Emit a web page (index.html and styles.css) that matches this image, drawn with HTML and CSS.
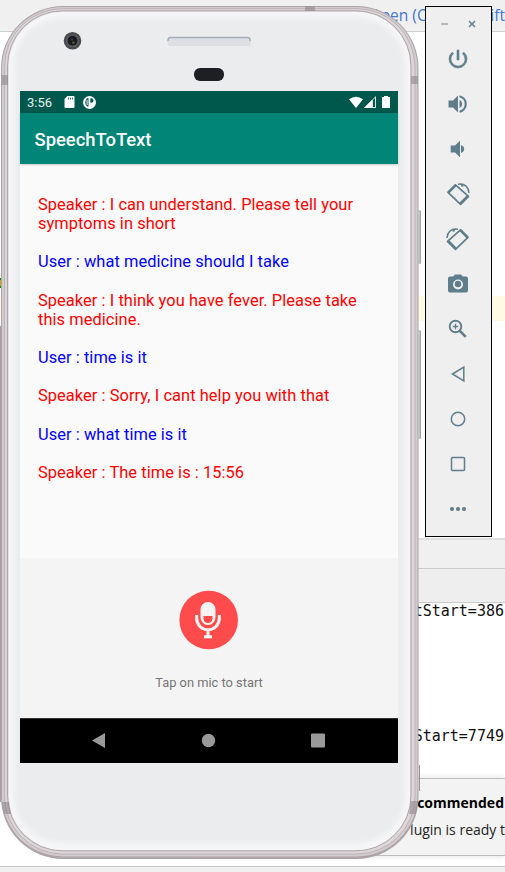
FILE: index.html
```html
<!DOCTYPE html>
<html lang="en">
<head>
<meta charset="utf-8">
<title>SpeechToText</title>
<link rel="stylesheet" href="styles.css">
</head>
<body>
<div class="desktop">
  <div class="ide">
    <div class="ide-top"><span class="hint">Open (C<span class="keys">trl+Sh</span>ift</span></div>
    <div class="editor"><div class="mark"></div><div class="highlight"></div></div>
    <div class="tabs"></div>
    <div class="tool-head"></div>
    <div class="console">
      <div class="log">tStart=386</div>
      <div class="log">Start=7749</div>
    </div>
    <div class="notice">
      <div class="notice-title">commended</div>
      <div class="notice-body">lugin is ready t</div>
    </div>
    <div class="gap"></div>
    <div class="statusline"></div>
  </div>

  <div class="phone">
    <svg class="frame" width="424" height="854" viewBox="0 6 424 854">
      <defs>
        <linearGradient id="key" x1="0" x2="1" y1="0" y2="0">
          <stop offset="0" stop-color="#a8a8a8"/><stop offset=".45" stop-color="#e2e6e3"/><stop offset="1" stop-color="#969896"/>
        </linearGradient>
        <filter id="soft" x="-5%" y="-5%" width="110%" height="110%"><feGaussianBlur stdDeviation="2.500"/></filter>
      </defs>
      <rect x="416" y="210" width="5" height="54" rx="1.500" fill="url(#key)"/>
      <rect x="416" y="330" width="5" height="109" rx="1.500" fill="url(#key)"/>
      <path d="M419.500 765v26" stroke="#989496"/>
      <path d="M.5 326v476" stroke="#a5a1a4"/>
      <rect x="1" y="6" width="417.500" height="853" rx="62" fill="#aca4a6"/>
      <rect x="2" y="7" width="415.500" height="849.500" rx="61" fill="#d3cccf"/>
      <rect x="4.500" y="8.700" width="410.500" height="845.300" rx="58" fill="#ddd6d9" stroke="#b8b0b3" stroke-width=".9"/>
      <rect x="7.500" y="10.800" width="403.500" height="840" rx="55" fill="#e4e1e4" stroke="#a59fa2" stroke-width=".9"/>
      <rect x="9" y="12" width="401" height="838" rx="54" fill="#f6f6f8"/>
      <rect x="14" y="18" width="391" height="825" rx="48" fill="#ebecee" filter="url(#soft)"/>
      <path d="M2 75h6v10H2zM411 76h7v8h-7zM305 6.500h10v4.500h-10zM2 802h7l2 12H4z" fill="#8d8789" opacity=".6"/>
      <path d="M411 801h7l-2 13h-7z" fill="#8d8789" opacity=".6"/>
      <circle cx="72.500" cy="40.800" r="8.800" fill="#494b4f"/>
      <circle cx="72.500" cy="40.800" r="6.300" fill="#5e6064"/>
      <circle cx="72.500" cy="40.800" r="5" fill="#191b20"/>
      <circle cx="73.300" cy="42.800" r="1.300" fill="#595728"/>
      <circle cx="72" cy="39.500" r="1" fill="#33415b"/>
      <rect x="167.500" y="37" width="83.500" height="9" rx="3" fill="#dce0e4"/>
      <path d="M168 41v-1q0-2.500 3-2.500h76q3 0 3 2.500v1" fill="none" stroke="#a6adb7" stroke-width="1.300"/>
      <rect x="194" y="68" width="30" height="13" rx="6" fill="#1d1f23"/>
    </svg>
    <div class="screen">
      <div class="status">
        <span class="time">3:56</span>
        <svg class="sd" width="11" height="12" viewBox="0 0 11 12"><path d="M3.500 0h6q1 0 1 1v10q0 1-1 1h-8q-1 0-1-1V3z" fill="#fff"/><path d="M4.500 1.500v2M6.500 1.500v2M8.500 1.500v2" stroke="#00574b" stroke-width=".8"/></svg>
        <svg class="app" width="13" height="13" viewBox="0 0 13 13"><circle cx="6.500" cy="6.500" r="6.500" fill="#fff"/><path d="M5.500 2.200v8.300H4.200Q2.300 9 2.300 6.500T4 2.200z" fill="#00574b"/><path d="M4.100 4v5" stroke="#fff"/><path d="M7.300 2.300h1.200q2 .3 2 2.200t-2 2.200H7.300z" fill="#00574b"/></svg>
        <svg class="signals" width="42" height="13" viewBox="0 0 42 13"><path d="M0 3.300Q7 -1.700 14 3.300L7 12z" fill="#fff"/><path d="M15 12 27 0v12z" fill="#d5e6e3"/><path d="M15 12l8-8v8z" fill="#fff"/><path d="M24 4v7h2V2z" fill="#00574b"/><path d="M35 0h4v1h2v11h-8V1h2z" fill="#fff"/></svg>
      </div>
      <div class="appbar">SpeechToText</div>
      <div class="chat">
        <p class="speaker">Speaker : I can understand. Please tell your<br>symptoms in short</p>
        <p class="user">User : what medicine should I take</p>
        <p class="speaker">Speaker : I think you have fever. Please take<br>this medicine.</p>
        <p class="user">User : time is it</p>
        <p class="speaker">Speaker : Sorry, I cant help you with that</p>
        <p class="user">User : what time is it</p>
        <p class="speaker">Speaker : The time is : 15:56</p>
      </div>
      <div class="mic">
        <svg width="60" height="60" viewBox="0 0 60 60"><circle cx="29.700" cy="30" r="29.300" fill="#ff4b4b"/><rect x="21.500" y="12" width="15" height="23" rx="7.500" fill="#f8f4f4"/><path d="M24.500 26h9v2.500a4.500 4.500 0 0 1-9 0z" fill="#ff4b4b"/><path d="M17.700 25v3.500a11.300 11.300 0 0 0 22.600 0V25M29 40v7" fill="none" stroke="#f8f4f4" stroke-width="3"/><path d="M25 46.800h8" stroke="#f8f4f4" stroke-width="3"/></svg>
        <div class="tap">Tap on mic to start</div>
      </div>
      <div class="nav">
        <svg width="378" height="44" viewBox="0 0 378 44"><path d="M72 21.500 85 14v15z" fill="#999"/><circle cx="188.500" cy="21.500" r="6.700" fill="#999"/><rect x="291" y="14.500" width="14" height="14" rx="1" fill="#999"/></svg>
      </div>
    </div>
  </div>

  <div class="toolbar">
    <div class="window-buttons">
      <svg width="65" height="30" viewBox="0 0 65 30"><path d="M15 17h7" stroke="#9aabb3" stroke-width="1.500"/><path d="m43 14 6 6m0-6-6 6" stroke="#62808d" stroke-width="1.500"/></svg>
    </div>
    <svg class="tool" viewBox="0 0 24 24"><path d="M13 3h-2v10h2V3zm4.830 2.170-1.420 1.420A6.920 6.920 0 0 1 19 12a7 7 0 1 1-11.420-5.420L6.170 5.170A8.930 8.930 0 0 0 3 12a9 9 0 1 0 18 0c0-2.740-1.230-5.180-3.170-6.830z" stroke="#607d8b" stroke-width=".6"/></svg>
    <svg class="tool" viewBox="0 0 24 24"><path d="M2.500 8.500v7h4.500l5 5v-17l-5 5zM13.500 8v8c1.700-.7 2.700-2.200 2.700-4s-1-3.300-2.700-4z"/><path d="M13.500 4.200a8 8 0 0 1 0 15.600" fill="none" stroke="#607d8b" stroke-width="2.200"/></svg>
    <svg class="tool" viewBox="0 0 24 24"><path d="M4.700 8.500v7H9l5 4.800V3.700L9 8.500zM15 8v8c1.900-.7 3.200-2.200 3.200-4S16.900 8.700 15 8z"/></svg>
    <svg class="tool" viewBox="0 0 24 24"><g fill="none" stroke="#607d8b"><path d="M9.500 2.800 2 10.300l12.500 12 8-8z" stroke-width="1.700" stroke-linejoin="round"/><path d="M10 2.800 2.500 10.300M14 21.800l8-8" stroke-width="2.600"/><path d="M12 2.200q10-1 11 8.800" stroke-width="1.500"/></g><path d="m14.500 1 3.500 3.200-2.500.5z"/></svg>
    <svg class="tool" viewBox="0 0 24 24"><g fill="none" stroke="#607d8b"><path d="M14.500 2.800 22 10.300l-12.500 12-8-8z" stroke-width="1.700" stroke-linejoin="round"/><path d="m14 2.800 7.500 7.500M10 21.800l-8-8" stroke-width="2.600"/><path d="M12 2.200Q2 1.200 1 11" stroke-width="1.500"/></g><path d="M9.500 1 6 4.200l2.500.5z"/></svg>
    <svg class="tool" viewBox="0 0 24 24"><circle cx="12" cy="12" r="3.200"/><path d="M9 2.500 7.200 4.500H4a2 2 0 0 0-2 2v12a2 2 0 0 0 2 2h16a2 2 0 0 0 2-2v-12a2 2 0 0 0-2-2h-3.200L15 2.500zm3 15a5 5 0 1 1 0-10 5 5 0 0 1 0 10z" fill-rule="evenodd"/></svg>
    <svg class="tool" viewBox="0 0 24 24"><g fill="none" stroke="#607d8b"><circle cx="9.500" cy="9.500" r="5.800" stroke-width="1.900"/><path d="m13.500 13.500 6.300 6.300" stroke-width="2.500"/><path d="M9.500 6.800v5.400M6.800 9.500h5.400" stroke-width="1.300"/></g></svg>
    <svg class="tool" viewBox="0 0 24 24"><path d="M6.500 12 17.800 5v14z" fill="none" stroke="#607d8b" stroke-width="1.500"/></svg>
    <svg class="tool" viewBox="0 0 24 24"><circle cx="12" cy="12" r="6.700" fill="none" stroke="#607d8b" stroke-width="1.500"/></svg>
    <svg class="tool" viewBox="0 0 24 24"><rect x="5.500" y="5.500" width="13" height="13" rx="1" fill="none" stroke="#607d8b" stroke-width="1.500"/></svg>
    <svg class="tool" viewBox="0 0 24 24"><circle cx="6" cy="12" r="2.100"/><circle cx="12" cy="12" r="2.100"/><circle cx="18" cy="12" r="2.100"/></svg>
  </div>
</div>
</body>
</html>
```
FILE: styles.css
```css
* { box-sizing: border-box; }
body { margin: 0; font-family: Roboto, sans-serif; }
.desktop { position: relative; width: 505px; height: 872px; overflow: hidden; background: #fff; }
.ide { display: flex; flex-direction: column; height: 872px; }
.ide-top { height: 32px; flex: none; background: #f0f0f0; border-bottom: 1px solid #cfcfcf; text-align: right; }
.hint { font: 15.500px/30px "Open Sans", sans-serif; color: #4676cc; white-space: nowrap; }
.keys { letter-spacing: 3.500px; }
.editor { height: 506px; flex: none; padding-top: 246px; }
.mark { width: 1px; height: 10px; background: #c8a800; border: solid #168a16; border-width: 2px 0; }
.highlight { margin-top: 8px; height: 25px; background: #fffae3; }
.tabs { height: 31px; flex: none; background: #f0f0f0; border-top: 2px solid #dedede; border-bottom: 1px solid #cacaca; }
.tool-head { height: 34px; flex: none; background: #eee; border-bottom: 1px solid #cacaca; }
.console { height: 175px; flex: none; display: flex; flex-direction: column; gap: 105px; align-items: flex-end; padding-right: 1px; }
.log { font: 15px/17px "DejaVu Sans Mono", monospace; height: 20px; color: #111; white-space: nowrap; }
.notice { height: 78px; flex: none; margin-left: 200px; padding: 14px 1px 0 0; text-align: right; background: #f3f3f3; border-top: 1px solid #bdbdbd; border-bottom: 1px solid #bdbdbd; box-shadow: 0 0 6px rgba(0,0,0,.13); overflow: hidden; }
.notice-title { font: bold 14px/20px "Open Sans", sans-serif; color: #000; }
.notice-body { font: 14px/20px "Open Sans", sans-serif; color: #222; margin: 7px -1px 0 0; }
.gap { flex: 1; }
.statusline { height: 6px; flex: none; background: #f0f0f0; border-top: 1px solid #c8c8c8; }

.phone { position: absolute; left: 0; top: 6px; width: 424px; height: 854px; padding: 85px 26px 0 20px; }
.frame { position: absolute; left: 0; top: 0; }
.screen { position: relative; display: flex; flex-direction: column; width: 378px; height: 672px; background: #fafafa; }
.status { display: flex; align-items: center; height: 22px; padding: 0 7px; background: #00574b; color: #e8f2f0; }
.time { font-size: 13px; width: 37px; }
.app { margin-left: 8px; }
.signals { margin-left: auto; }
.appbar { height: 51px; flex: none; padding-left: 14.500px; background: #008577; color: #fff; font-size: 18.400px; font-weight: 500; line-height: 53px; box-shadow: 0 1px 2px rgba(0,0,0,.2); }
.chat { height: 394px; flex: none; padding: 30.800px 0 0 18px; font-size: 16.400px; letter-spacing: .07px; line-height: 19.170px; white-space: nowrap; }
.chat p { margin: 0 0 19.170px; }
.speaker { color: #f00; }
.user { color: #00f; }
.mic { display: flex; flex-direction: column; align-items: center; height: 160px; flex: none; padding-top: 32px; background: #f4f4f4; }
.tap { margin-top: 24px; font-size: 12.850px; line-height: 18px; color: #757575; }
.nav { height: 45px; flex: none; background: #000; border-top: 1px solid #333; }
.nav svg, .window-buttons svg { display: block; }

.toolbar { position: absolute; left: 425px; top: 6px; width: 67px; height: 531px; display: flex; flex-direction: column; background: #efefef; border: 1px solid #000; }
.window-buttons { height: 30px; margin-bottom: 10px; }
.tool { width: 24px; height: 24px; margin: 0 0 21px 20px; flex: none; fill: #607d8b; }
```
